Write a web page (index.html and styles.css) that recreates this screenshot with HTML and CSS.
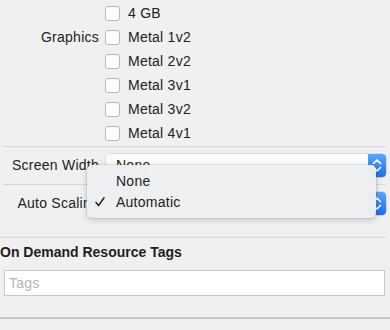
FILE: index.html
```html
<!DOCTYPE html>
<html>
<head>
<meta charset="utf-8">
<link rel="stylesheet" href="styles.css">
</head>
<body>
<div class="panel">
  <div class="checklist">
    <div class="label"></div>
    <label class="check"><span class="box"></span><span>4 GB</span></label>
    <div class="label">Graphics</div>
    <label class="check"><span class="box"></span><span>Metal 1v2</span></label>
    <div class="label"></div>
    <label class="check"><span class="box"></span><span>Metal 2v2</span></label>
    <div class="label"></div>
    <label class="check"><span class="box"></span><span>Metal 3v1</span></label>
    <div class="label"></div>
    <label class="check"><span class="box"></span><span>Metal 3v2</span></label>
    <div class="label"></div>
    <label class="check"><span class="box"></span><span>Metal 4v1</span></label>
  </div>
  <div class="sep inset"></div>
  <div class="field-row">
    <div class="label">Screen Width</div>
    <div class="popup">
      <span class="popup-value">None</span>
      <span class="stepper"><svg width="18" height="23" viewBox="0 0 18 23"><path d="M5.5 9.5 L9 6 L12.5 9.5 M5.5 13.5 L9 17 L12.5 13.5" fill="none" stroke="#fff" stroke-width="1.7" stroke-linecap="round" stroke-linejoin="round"/></svg></span>
    </div>
  </div>
  <div class="sep inset"></div>
  <div class="field-row tall">
    <div class="label">Auto Scaling</div>
    <div class="popup">
      <span class="popup-value">Automatic</span>
      <span class="stepper"><svg width="18" height="23" viewBox="0 0 18 23"><path d="M5.5 9.5 L9 6 L12.5 9.5 M5.5 13.5 L9 17 L12.5 13.5" fill="none" stroke="#fff" stroke-width="1.7" stroke-linecap="round" stroke-linejoin="round"/></svg></span>
    </div>
  </div>
  <div class="sep flush"></div>
  <div class="section">
    <h2 class="heading">On Demand Resource Tags</h2>
    <div class="tags-input">Tags</div>
  </div>
  <div class="sep bottom"></div>

  <div class="menu">
    <div class="menu-item"><span class="mark"></span>None</div>
    <div class="menu-item"><span class="mark"><svg width="10" height="10" viewBox="0 0 10 10"><path d="M1 5.6 L3.6 8.6 L9 0.8" fill="none" stroke="#222" stroke-width="1.5" stroke-linecap="round" stroke-linejoin="round"/></svg></span>Automatic</div>
  </div>
</div>
</body>
</html>
```

FILE: styles.css
```css
html, body {
  margin: 0;
  padding: 0;
  background: #f0f0f0;
}
body {
  font-family: "Liberation Sans", Arial, sans-serif;
  font-size: 14px;
  letter-spacing: 0.25px;
  color: #222;
  width: 390px;
  height: 330px;
  overflow: hidden;
}
.panel {
  position: relative;
  width: 390px;
  height: 330px;
}
.checklist {
  display: grid;
  grid-template-columns: 99px 1fr;
  column-gap: 6px;
  grid-auto-rows: 24px;
  padding-top: 1px;
}
.label {
  text-align: right;
  line-height: 24px;
  white-space: nowrap;
}
.check {
  display: flex;
  align-items: center;
  gap: 8px;
}
.box {
  width: 13px;
  height: 13px;
  border: 1px solid #b8b8b8;
  border-radius: 3px;
  background: #fff;
  box-shadow: inset 0 1px 0 #fafafa;
}
.sep {
  height: 1px;
  background: #d6d6d6;
}
.sep.inset {
  margin: 2px 5px 0 3px;
}
.checklist + .sep.inset {
  margin-top: 1px;
}
.sep.flush {
  margin-right: 5px;
}
.field-row {
  display: grid;
  grid-template-columns: 99px 1fr;
  column-gap: 7px;
  align-items: start;
  padding: 7px 4px 5px 0;
}
.field-row .label {
  line-height: 23px;
}
.field-row.tall {
  padding-bottom: 22px;
}
.popup {
  display: flex;
  height: 23px;
  border-radius: 4px;
  background: linear-gradient(#fbfbfb, #ffffff);
  box-shadow: 0 0 0 0.5px #c4c4c4, 0 1px 1px rgba(0,0,0,0.08);
}
.popup-value {
  flex: 1;
  line-height: 23px;
  padding-left: 10px;
}
.stepper {
  width: 18px;
  height: 23px;
  border-radius: 0 4px 4px 0;
  background: linear-gradient(#5aa6fb, #1b6ff0);
}
.stepper svg {
  display: block;
}
.section {
  padding: 6px 5px 0 0;
}
.heading {
  margin: 0;
  font-size: 14px;
  font-weight: bold;
  letter-spacing: 0;
  line-height: 17px;
  color: #1e1e1e;
}
.tags-input {
  margin: 9px 0 0 4px;
  height: 24px;
  border: 1px solid #c8c8c8;
  background: #fff;
  color: #b4b4b4;
  line-height: 24px;
  padding-left: 4px;
}
.sep.bottom {
  margin-top: 21px;
  height: 2px;
  background: linear-gradient(#d0d0d0, #bcbcbc);
}
.menu {
  position: absolute;
  left: 87px;
  top: 165px;
  width: 289px;
  height: 53px;
  box-sizing: border-box;
  padding-top: 5px;
  border-radius: 5px;
  background: rgba(238, 239, 240, 0.98);
  box-shadow: 0 0 0 0.5px rgba(0,0,0,0.16), 0 2px 7px rgba(0,0,0,0.18);
}
.menu-item {
  display: flex;
  align-items: center;
  height: 21px;
  font-size: 14px;
  color: #222;
}
.mark {
  width: 29px;
  padding-left: 8px;
  box-sizing: border-box;
  display: flex;
  align-items: center;
}
.mark svg {
  display: block;
}
```
